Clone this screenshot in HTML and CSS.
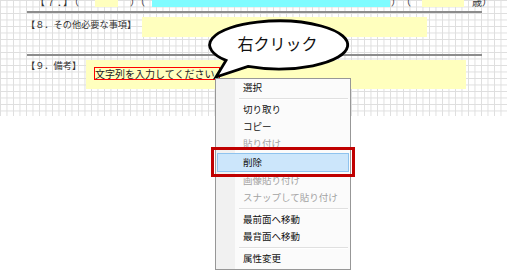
FILE: index.html
```html
<!DOCTYPE html>
<html lang="ja">
<head>
<meta charset="utf-8">
<link rel="stylesheet" href="styles.css">
</head>
<body>
<div class="sheet">
  <div class="row-top">
    <span class="t t1">【７．】（</span>
    <span class="box yellow w1"></span>
    <span class="t t2">）（</span>
    <span class="box cyan w2"></span>
    <span class="t t3">）　（</span>
    <span class="box yellow w3"></span>
    <span class="t t4">歳）</span>
  </div>
  <div class="rule"></div>
  <div class="sec sec8">
    <div class="label l8">【８．その他必要な事項】</div>
    <div class="ybox y8"></div>
  </div>
  <div class="rule"></div>
  <div class="sec sec9">
    <div class="label l9">【９．備考】</div>
    <div class="ybox y9"><div class="input">文字列を入力してください</div></div>
  </div>
</div>

<svg class="bubble" width="150" height="70" viewBox="0 0 150 70">
  <path d="M 21 45.4 A 69 24 0 1 1 43 51.4 L 11 62 Z" fill="#fff" stroke="#000" stroke-width="2.8" stroke-linejoin="miter"/>
  <text x="72.5" y="35" text-anchor="middle" class="bubble-text">右クリック</text>
</svg>

<div class="menu">
  <div class="item">選択</div>
  <div class="sep"></div>
  <div class="item">切り取り</div>
  <div class="item">コピー</div>
  <div class="item dis">貼り付け</div>
  <div class="item hot">削除</div>
  <div class="item dis">画像貼り付け</div>
  <div class="item dis">スナップして貼り付け</div>
  <div class="sep"></div>
  <div class="item">最前面へ移動</div>
  <div class="item">最背面へ移動</div>
  <div class="sep"></div>
  <div class="item">属性変更</div>
</div>
<div class="redbox"></div>
</body>
</html>
```

FILE: styles.css
```css
html, body {
  margin: 0;
  padding: 0;
  background: #fff;
}
body {
  width: 507px;
  height: 271px;
  overflow: hidden;
  position: relative;
  font-family: "Noto Sans CJK JP", "Noto Sans", sans-serif;
  color: #222;
}
.sheet {
  height: 116px;
  background-color: #fff;
  background-image:
    linear-gradient(to right, #dedede 1px, transparent 1px),
    linear-gradient(to bottom, #dedede 1px, transparent 1px);
  background-size: 6.5px 6.5px;
  background-position: 0 0;
}
.row-top {
  display: flex;
  align-items: flex-end;
  height: 8px;
  overflow: hidden;
}
.row-top .t {
  font-size: 10px;
  line-height: 12px;
  white-space: nowrap;
  color: #333;
  align-self: flex-end;
}
.row-top .box {
  align-self: flex-start;
  height: 7px;
}
.t1 { margin-left: 35px; width: 60px; letter-spacing: 1px; }
.t2 { width: 22px; padding-left: 12px; }
.t3 { width: 31px; padding-left: 1px; }
.t4 { padding-left: 8px; }
.yellow { background: #ffffbe; }
.cyan { background: #7ffcff; }
.w1 { width: 23px; }
.w2 { width: 238px; }
.w3 { width: 42px; }
.rule {
  margin-top: 3px;
  margin-left: 27px;
  width: 455px;
  height: 2px;
  background: #8c8c8c;
}
.sec {
  display: flex;
  padding-left: 26px;
}
.sec8 { height: 41px; }
.sec9 { height: 60px; }
.label {
  font-size: 9.2px;
  line-height: 12px;
  color: #333;
  white-space: nowrap;
}
.l8 { width: 116px; padding-top: 5px; }
.l9 { width: 60px; padding-top: 3px; }
.sec9 + .rule, .sec8 + .rule { margin-top: 0; }
.ybox { background: #ffffbe; }
.y8 { margin-top: 4px; width: 285px; height: 20px; }
.y9 { margin-top: 4px; width: 380px; height: 29px; }
.input {
  margin-left: 8px;
  margin-top: 7px;
  width: 126px;
  height: 13px;
  box-sizing: border-box;
  border: 1px solid #ff0000;
  font-size: 10px;
  line-height: 11px;
  color: #222;
  white-space: nowrap;
  overflow: hidden;
}
.bubble {
  position: absolute;
  left: 205px;
  top: 15px;
}
.bubble-text {
  font-family: "Noto Sans CJK JP", sans-serif;
  font-size: 16px;
  fill: #111;
}
.menu {
  position: absolute;
  left: 215px;
  top: 78px;
  width: 136px;
  box-sizing: border-box;
  border: 1px solid #979797;
  padding-bottom: 2px;
  background: linear-gradient(to right, #f1f1f1 0, #f1f1f1 19px, #fbfbfb 19px);
  font-size: 9.5px;
  color: #111;
}
.item {
  height: 17px;
  line-height: 17px;
  padding-left: 27px;
  white-space: nowrap;
}
.item.dis { color: #a3a3a3; }
.item.hot {
  margin: 1px 1px 0 1px;
  height: 19px;
  line-height: 17px;
  box-sizing: border-box;
  border: 1px solid #8fc3ee;
  background: #cce6fb;
  padding-left: 25px;
}
.sep {
  height: 5px;
  box-sizing: border-box;
  margin-left: 23px;
  margin-right: 2px;
  padding-top: 2px;
}
.sep::before {
  content: "";
  display: block;
  height: 1px;
  background: #e0e0e0;
  border-bottom: 1px solid #fff;
}
.redbox {
  position: absolute;
  left: 211px;
  top: 147px;
  width: 144px;
  height: 30px;
  box-sizing: border-box;
  border: 3px solid #c00000;
}
```
